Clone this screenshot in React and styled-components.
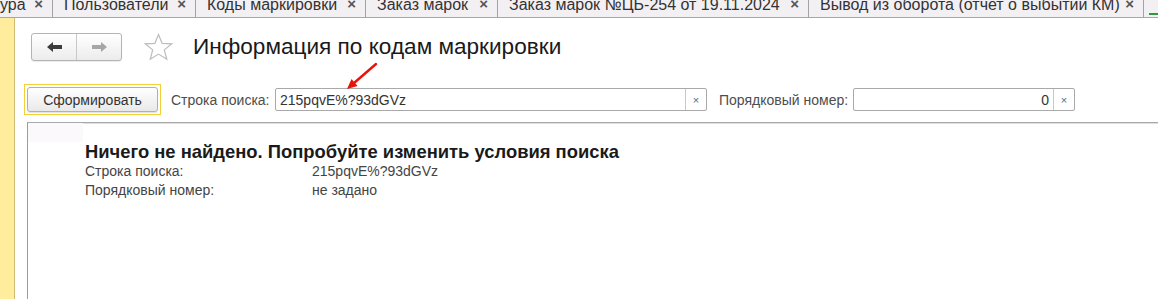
import React from 'react';
import styled, { createGlobalStyle } from 'styled-components';

const Global = createGlobalStyle`
  html, body { margin: 0; padding: 0; background: #fff; }
  body { font-family: "Liberation Sans", Arial, sans-serif; overflow: hidden; }
`;

const Page = styled.div`
  position: relative;
  width: 1158px;
  height: 299px;
  display: flex;
  flex-direction: column;
  overflow: hidden;
  background: #fff;
`;

const TabBar = styled.div`
  flex: none;
  height: 17px;
  display: flex;
  background: #f3f0f4;
  border-bottom: 1px solid #a6a6a6;
  overflow: hidden;
`;

const Tab = styled.div`
  flex: none;
  box-sizing: border-box;
  width: ${p => p.$w}px;
  padding: 0 9px 0 ${p => p.$pl}px;
  border-right: 1px solid #a3a3a3;
  display: flex;
  justify-content: space-between;
  align-items: flex-start;
  font-size: 16px;
  line-height: 16px;
  color: #333;
  white-space: nowrap;
  overflow: hidden;
`;

const TabText = styled.span`
  margin-top: -3px;
`;

const TabClose = styled.span`
  margin-top: -4px;
  font-size: 15px;
  font-weight: bold;
  color: #555;
`;

const GreenMark = styled.div`
  align-self: flex-end;
  margin: 0 0 2px 5px;
  width: 12px;
  height: 2px;
  background: #2e9a3c;
`;

const Body = styled.div`
  flex: 1;
  display: flex;
  min-height: 0;
`;

const SideStrip = styled.div`
  flex: none;
  width: 14px;
  background: #ffec9c;
  border-right: 1px solid #cdbd78;
`;

const Main = styled.div`
  flex: 1;
  display: flex;
  flex-direction: column;
  min-width: 0;
`;

const Header = styled.div`
  display: flex;
  align-items: center;
  margin-top: 15px;
  padding-left: 16px;
  height: 28px;
`;

const NavGroup = styled.div`
  display: flex;
  box-sizing: border-box;
  width: 91px;
  height: 28px;
  border: 1px solid #b4b4b4;
  border-radius: 3px;
  background: linear-gradient(#ffffff, #ececec);
  box-shadow: 0 1px 1px rgba(0, 0, 0, 0.08);
`;

const NavButton = styled.div`
  flex: 1;
  display: flex;
  align-items: center;
  justify-content: center;
  & + & { border-left: 1px solid #c8c8c8; }
`;

const StarBox = styled.div`
  margin-left: 21px;
  width: 31px;
  height: 28px;
  display: flex;
  align-items: center;
`;

const Title = styled.h1`
  margin: 0 0 0 19px;
  font-size: 22.6px;
  font-weight: normal;
  color: #1a1a1a;
  white-space: nowrap;
`;

const FormRow = styled.div`
  display: flex;
  align-items: center;
  margin-top: 23px;
  padding-left: 9px;
  height: 31px;
`;

const FocusFrame = styled.div`
  box-sizing: border-box;
  width: 137px;
  height: 31px;
  padding: 2px;
  border: 1px solid #f3cf3a;
  display: flex;
`;

const Button = styled.div`
  flex: 1;
  box-sizing: border-box;
  border: 1px solid #b0b0b0;
  border-radius: 3px;
  background: linear-gradient(#ffffff, #e9e9e9);
  box-shadow: 0 1px 1px rgba(0, 0, 0, 0.12);
  display: flex;
  align-items: center;
  justify-content: center;
  font-size: 14px;
  color: #333;
`;

const Label = styled.span`
  margin-left: ${p => p.$ml}px;
  width: ${p => p.$w}px;
  font-size: 14px;
  color: #4d4d4d;
  white-space: nowrap;
`;

const Field = styled.div`
  box-sizing: border-box;
  width: ${p => p.$w}px;
  height: 23px;
  border: 1px solid #a9a9a9;
  border-radius: 2px;
  display: flex;
  background: #fff;
`;

const FieldValue = styled.div`
  flex: 1;
  padding: 0 4px;
  display: flex;
  align-items: center;
  justify-content: ${p => (p.$right ? 'flex-end' : 'flex-start')};
  font-size: 14px;
  color: #333;
`;

const FieldClear = styled.div`
  width: 20px;
  border-left: 1px solid #c8c8c8;
  display: flex;
  align-items: center;
  justify-content: center;
  font-size: 11px;
  color: #666;
`;

const Content = styled.div`
  flex: 1;
  margin-top: 7px;
  margin-left: 12px;
  border-top: 1px solid #a9a9a9;
  border-left: 1px solid #9c9c9c;
  box-shadow: inset 0 1px 0 #dedede;
  display: flex;
  flex-direction: column;
`;

const CornerCell = styled.div`
  width: 55px;
  height: 19px;
  background: #fcf9fc;
`;

const Report = styled.div`
  padding-left: 57px;
  display: flex;
  flex-direction: column;
`;

const Heading = styled.div`
  font-size: 18.4px;
  font-weight: bold;
  line-height: 20px;
  color: #1a1a1a;
  white-space: nowrap;
`;

const InfoRow = styled.div`
  display: grid;
  grid-template-columns: 227px auto;
  font-size: 14px;
  line-height: 19px;
  color: #444;
`;

const ArrowOverlay = styled.svg`
  position: absolute;
  left: 340px;
  top: 60px;
  pointer-events: none;
`;

const tabs = [
  { t: 'ура', w: 53, pl: 0 },
  { t: 'Пользователи', w: 143, pl: 11 },
  { t: 'Коды маркировки', w: 170, pl: 11 },
  { t: 'Заказ марок', w: 132, pl: 11 },
  { t: 'Заказ марок №ЦБ-254 от 19.11.2024', w: 311, pl: 11 },
  { t: 'Вывод из оборота (отчет о выбытии КМ)', w: 335, pl: 11 },
];

function Arrow({ dir, color }) {
  return (
    <svg width="17" height="12" viewBox="0 0 17 12">
      {dir === 'left' ? (
        <path d="M1 6 L7 1 L7 4 L16 4 L16 8 L7 8 L7 11 Z" fill={color} />
      ) : (
        <path d="M16 6 L10 1 L10 4 L1 4 L1 8 L10 8 L10 11 Z" fill={color} />
      )}
    </svg>
  );
}

function Star() {
  return (
    <svg width="31" height="28" viewBox="0 0 31 28">
      <path
        d="M15.5 1.5 L19.1 10.3 L28.8 10.8 L21.3 16.9 L23.8 26.3 L15.5 21.1 L7.2 26.3 L9.7 16.9 L2.2 10.8 L11.9 10.3 Z"
        fill="#fff"
        stroke="#bdbdbd"
        strokeWidth="1.2"
      />
    </svg>
  );
}

export default function App() {
  return (
    <>
      <Global />
      <Page>
        <TabBar>
          {tabs.map(tab => (
            <Tab key={tab.t} $w={tab.w} $pl={tab.pl}>
              <TabText>{tab.t}</TabText>
              <TabClose>×</TabClose>
            </Tab>
          ))}
          <GreenMark />
        </TabBar>
        <Body>
          <SideStrip />
          <Main>
            <Header>
              <NavGroup>
                <NavButton><Arrow dir="left" color="#3c3c3c" /></NavButton>
                <NavButton><Arrow dir="right" color="#a6a6a6" /></NavButton>
              </NavGroup>
              <StarBox><Star /></StarBox>
              <Title>Информация по кодам маркировки</Title>
            </Header>
            <FormRow>
              <FocusFrame>
                <Button>Сформировать</Button>
              </FocusFrame>
              <Label $ml={10} $w={104}>Строка поиска:</Label>
              <Field $w={432}>
                <FieldValue>215pqvE%?93dGVz</FieldValue>
                <FieldClear>×</FieldClear>
              </Field>
              <Label $ml={12} $w={134}>Порядковый номер:</Label>
              <Field $w={222}>
                <FieldValue $right>0</FieldValue>
                <FieldClear>×</FieldClear>
              </Field>
            </FormRow>
            <Content>
              <CornerCell />
              <Report>
                <Heading>Ничего не найдено. Попробуйте изменить условия поиска</Heading>
                <InfoRow><span>Строка поиска:</span><span>215pqvE%?93dGVz</span></InfoRow>
                <InfoRow><span>Порядковый номер:</span><span>не задано</span></InfoRow>
              </Report>
            </Content>
          </Main>
        </Body>
        <ArrowOverlay width="45" height="34" viewBox="0 0 45 34">
          <line x1="36" y1="4" x2="14.6" y2="22.5" stroke="#e8140c" strokeWidth="2.4" strokeLinecap="round" />
          <polygon points="7,29 17.6,25.9 11.5,18.9" fill="#e8140c" />
        </ArrowOverlay>
      </Page>
    </>
  );
}
